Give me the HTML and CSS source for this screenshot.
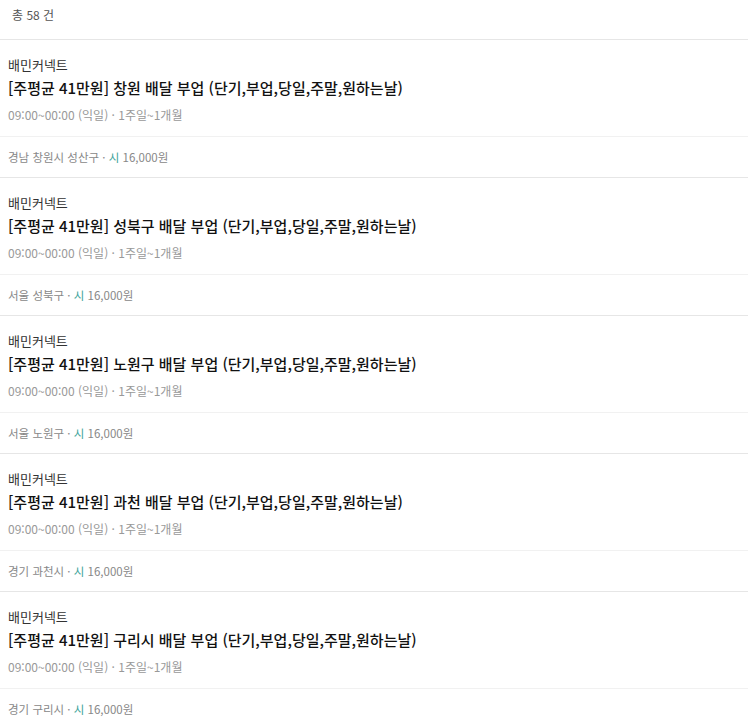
FILE: index.html
```html
<!DOCTYPE html>
<html lang="ko">
<head>
  <meta charset="UTF-8">
  <meta name="viewport" content="width=device-width, initial-scale=1.0">
  <title>알바 목록</title>
  <link rel="stylesheet" href="styles.css">
</head>
<body>

  <div class="total">총 58 건</div>

  <ul class="job-list">
    <li class="job">
      <div class="job-main">
        <div class="company">배민커넥트</div>
        <div class="title">[주평균 41만원] 창원 배달 부업 (단기,부업,당일,주말,원하는날)</div>
        <div class="meta">09:00~00:00 (익일) · 1주일~1개월</div>
      </div>
      <div class="job-foot">경남 창원시 성산구 · <span class="pay-type">시</span> 16,000원</div>
    </li>
    <li class="job">
      <div class="job-main">
        <div class="company">배민커넥트</div>
        <div class="title">[주평균 41만원] 성북구 배달 부업 (단기,부업,당일,주말,원하는날)</div>
        <div class="meta">09:00~00:00 (익일) · 1주일~1개월</div>
      </div>
      <div class="job-foot">서울 성북구 · <span class="pay-type">시</span> 16,000원</div>
    </li>
    <li class="job">
      <div class="job-main">
        <div class="company">배민커넥트</div>
        <div class="title">[주평균 41만원] 노원구 배달 부업 (단기,부업,당일,주말,원하는날)</div>
        <div class="meta">09:00~00:00 (익일) · 1주일~1개월</div>
      </div>
      <div class="job-foot">서울 노원구 · <span class="pay-type">시</span> 16,000원</div>
    </li>
    <li class="job">
      <div class="job-main">
        <div class="company">배민커넥트</div>
        <div class="title">[주평균 41만원] 과천 배달 부업 (단기,부업,당일,주말,원하는날)</div>
        <div class="meta">09:00~00:00 (익일) · 1주일~1개월</div>
      </div>
      <div class="job-foot">경기 과천시 · <span class="pay-type">시</span> 16,000원</div>
    </li>
    <li class="job">
      <div class="job-main">
        <div class="company">배민커넥트</div>
        <div class="title">[주평균 41만원] 구리시 배달 부업 (단기,부업,당일,주말,원하는날)</div>
        <div class="meta">09:00~00:00 (익일) · 1주일~1개월</div>
      </div>
      <div class="job-foot">경기 구리시 · <span class="pay-type">시</span> 16,000원</div>
    </li>
  </ul>

</body>
</html>
```

FILE: styles.css
```css
body {
  margin: 0;
  background-color: #fff;
  font-family: "Noto Sans CJK KR", "Noto Sans", sans-serif;
  color: #222;
}
.total {
  height: 39px;
  line-height: 30px;
  padding: 0 12px;
  font-size: 12px;
  color: #555;
  border-bottom: 1px solid #e6e6e6;
}
.job-list {
  list-style: none;
  margin: 0;
  padding: 0;
}
.job {
  border-bottom: 1px solid #e6e6e6;
}
.job-main {
  padding: 16px 8px 12px;
  border-bottom: 1px solid #f1f1f1;
}
.company {
  font-size: 13px;
  line-height: 18px;
  color: #333;
}
.title {
  margin-top: 3px;
  font-size: 15px;
  line-height: 22px;
  font-weight: 500;
  color: #111;
}
.meta {
  margin-top: 7px;
  font-size: 12px;
  line-height: 18px;
  color: #999;
}
.job-foot {
  padding: 11px 8px 11px;
  font-size: 11.5px;
  line-height: 18px;
  color: #888;
}
.pay-type {
  color: #3aa39a;
}
```
